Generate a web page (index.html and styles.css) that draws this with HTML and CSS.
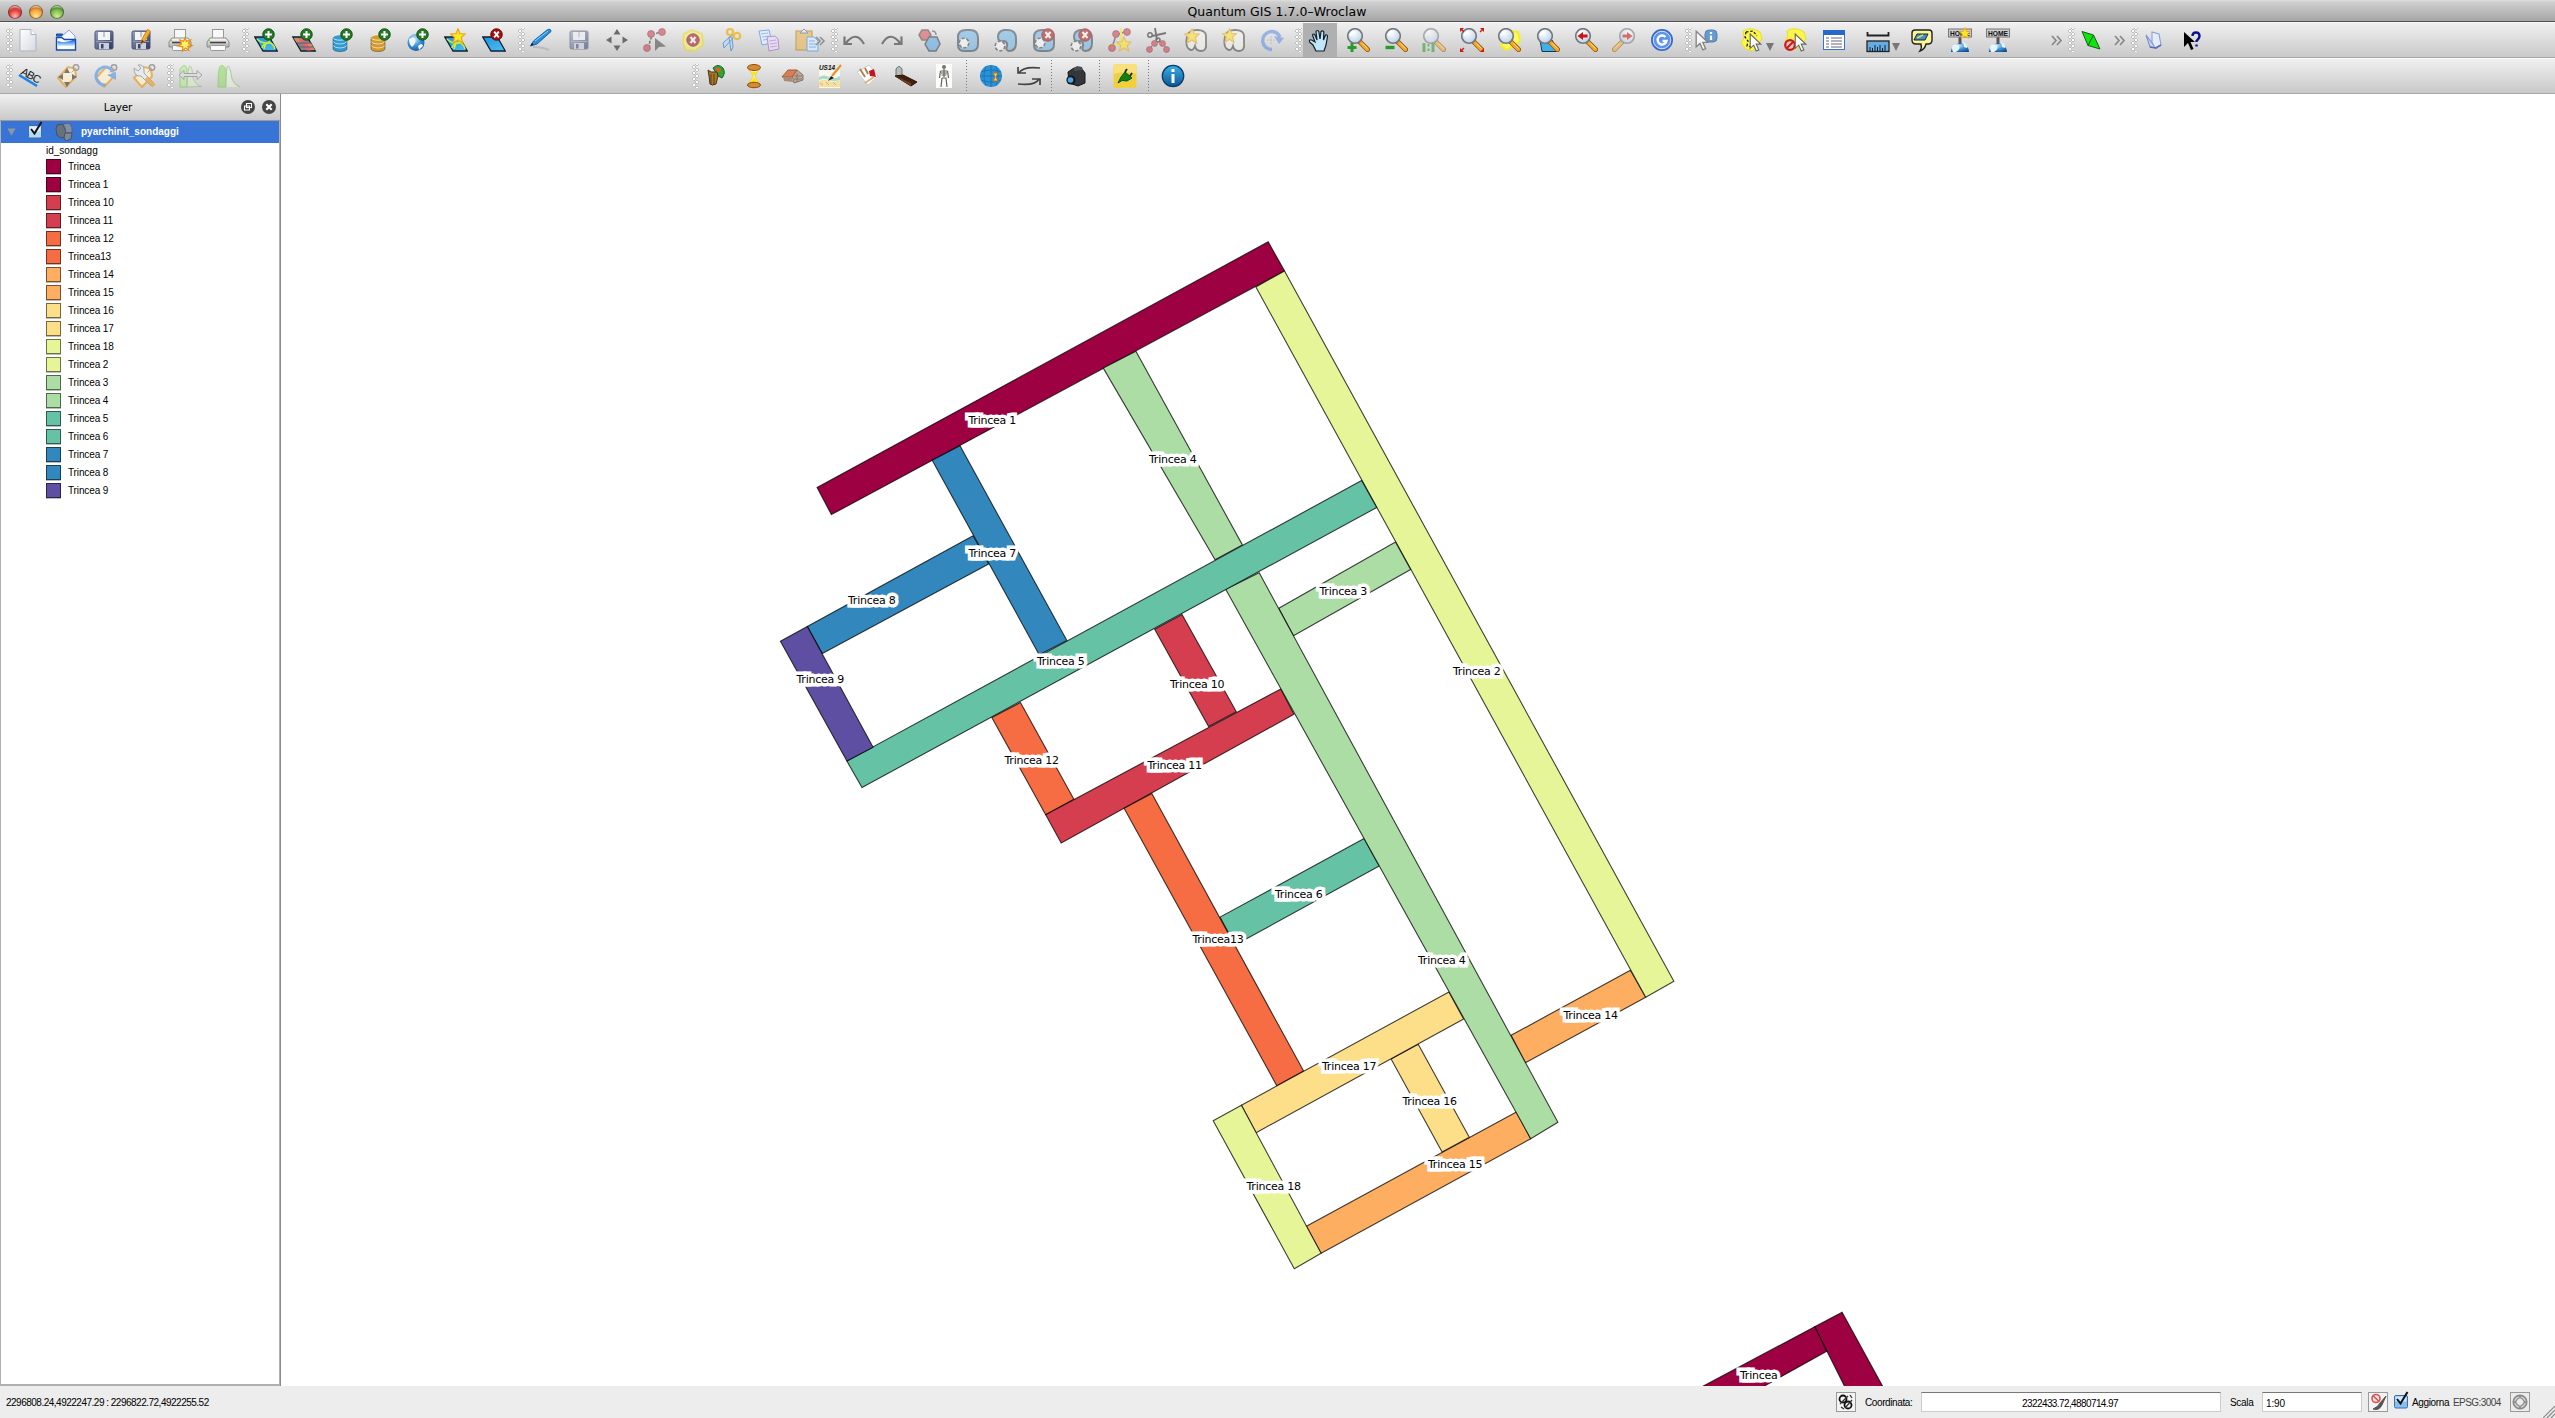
FILE: index.html
```html
<!DOCTYPE html>
<html lang="it">
<head>
<meta charset="utf-8">
<title>Quantum GIS 1.7.0-Wroclaw</title>
<link rel="stylesheet" href="styles.css">
</head>
<body>
<svg class="defs" width="0" height="0" aria-hidden="true">
  <defs>
    <linearGradient id="gPaper" x1="0" y1="0" x2="1" y2="1"><stop offset="0" stop-color="#fff"/><stop offset="1" stop-color="#d5d9e2"/></linearGradient>
    <linearGradient id="gDisk" x1="0" y1="0" x2="1" y2="1"><stop offset="0" stop-color="#98a3c0"/><stop offset="1" stop-color="#2d3557"/></linearGradient>
    <linearGradient id="gBlue" x1="0" y1="0" x2="0" y2="1"><stop offset="0" stop-color="#0f4fc0"/><stop offset=".55" stop-color="#5aa5f5"/><stop offset="1" stop-color="#d8efff"/></linearGradient>
    <linearGradient id="gSky" x1="0" y1="0" x2="1" y2="1"><stop offset="0" stop-color="#1e93df"/><stop offset="1" stop-color="#4fc0f5"/></linearGradient>
    <linearGradient id="gGray" x1="0" y1="0" x2="0" y2="1"><stop offset="0" stop-color="#fff"/><stop offset="1" stop-color="#aaa"/></linearGradient>
    <radialGradient id="gGlobe" cx=".4" cy=".3" r=".8"><stop offset="0" stop-color="#d3edff"/><stop offset=".5" stop-color="#3d93d8"/><stop offset="1" stop-color="#124a8c"/></radialGradient>
    <radialGradient id="gLens" cx=".4" cy=".3" r=".8"><stop offset="0" stop-color="#fff"/><stop offset="1" stop-color="#b4cbe4"/></radialGradient>
    <linearGradient id="gInfo" x1="0" y1="0" x2="0" y2="1"><stop offset="0" stop-color="#3ab0e8"/><stop offset="1" stop-color="#0a5596"/></linearGradient>
    <symbol id="plus" viewBox="0 0 14 14"><circle cx="7" cy="7" r="6.2" fill="#227a22" stroke="#114a11"/><path d="M7 3.3v7.4M3.3 7h7.4" stroke="#fff" stroke-width="2.2"/></symbol>
    <symbol id="cross" viewBox="0 0 14 14"><circle cx="7" cy="7" r="6.2" fill="#a41010" stroke="#600"/><path d="M4.5 4l5 6M9.5 4l-5 6" stroke="#fff" stroke-width="2"/></symbol>
    <symbol id="star" viewBox="0 0 16 16"><path d="M8 .8l2 4.9 5.2.3-4 3.5 1.5 5.6L8 12l-4.7 3.1 1.4-5.6-4-3.5 5.3-.3z" fill="#ffea20" stroke="#f0a818" stroke-width="1.2"/></symbol>
    <symbol id="disk" viewBox="0 0 24 24"><rect x="3" y="3" width="18" height="18" rx="1.5" fill="url(#gDisk)" stroke="#4b5575"/><rect x="6" y="4" width="12" height="8" fill="#f2f4f8"/><path d="M12 4v5" stroke="#8a94ad"/><path d="M4 13.5h16" stroke="#8d96b5"/><rect x="7" y="15" width="10" height="6" fill="#c9cede"/><rect x="9" y="16" width="2.5" height="4.5" fill="#3a4468"/></symbol>
    <symbol id="printer" viewBox="0 0 24 24"><rect x="6.5" y="1.5" width="11" height="10" fill="#f8f8f8" stroke="#999"/><path d="M4 10h16l3 4v5H1v-5z" fill="url(#gGray)" stroke="#8b8b8b"/><path d="M4 14.5h16" stroke="#444" stroke-width="1.6"/><rect x="4.5" y="17.5" width="15" height="5" rx="1" fill="#fafafa" stroke="#999"/><circle cx="3" cy="12.5" r="1" fill="#7c3"/></symbol>
    <symbol id="tile" viewBox="0 0 24 24"><path d="M.8 9h14.5l8 14H9z" fill="url(#gSky)" stroke="#102030" stroke-width="1.3"/></symbol>
    <symbol id="vect" viewBox="0 0 24 24"><use href="#tile"/><path d="M3 11q4 4 9 4t3-5M8 20q1-4 6-5t7 6M12 15l-2 6" fill="none" stroke="#c8ee30" stroke-width="1.6"/></symbol>
    <symbol id="lens" viewBox="0 0 24 24"><path d="M14 14l7.5 7.5" stroke="#8a5510" stroke-width="5" stroke-linecap="round"/><path d="M15 15l6.4 6.4" stroke="#f6a72a" stroke-width="3.6" stroke-linecap="round"/><path d="M16.5 15.5l5 5" stroke="#ffdf90" stroke-width="1"/><circle cx="9" cy="8" r="7.3" fill="url(#gLens)" stroke="#72777e" stroke-width="1.6"/><path d="M4.5 8Q5 4 9 3.5" stroke="#fff" stroke-width="1.4" fill="none"/></symbol>
    <symbol id="arrow" viewBox="0 0 12 18"><path d="M1 1v13.5l3.3-3 2.4 5.6 2.4-1.1-2.4-5.4H11z" fill="#fff" stroke="#666" stroke-width="1.1"/></symbol>
    <symbol id="node" viewBox="0 0 8 8"><circle cx="4" cy="4" r="3.4" fill="#cc3a46" stroke="#7a2028" stroke-width=".8"/></symbol>
    <symbol id="tag" viewBox="0 0 24 24"><path d="M2 14L12 3l7 1.5 1 8L10 23z" fill="#fff3d0" stroke="#e8a23a" stroke-width="2"/><circle cx="20" cy="3.5" r="2.7" fill="none" stroke="#888" stroke-width="1.5"/><path d="M18.5 5.5l-3 3" stroke="#999"/></symbol>
    <symbol id="db" viewBox="0 0 16 18"><path d="M1 3.5v11C1 16.500 4 17.500 8 17.500s7-1 7-3v-11z" fill="currentColor"/><path d="M1 7.500q2 2.500 7 2.500t7-2.500M1 11.500q2 2.500 7 2.500t7-2.500" fill="none" stroke="#fff" stroke-opacity=".6"/><ellipse cx="8" cy="3.500" rx="7" ry="2.700" fill="currentColor" stroke="#fff" stroke-opacity=".7"/><path d="M1 3.500v11C1 16.500 4 17.500 8 17.500s7-1 7-3v-11" fill="none" stroke="#000" stroke-opacity=".35"/></symbol>
    <symbol id="blob" viewBox="0 0 24 24"><path d="M2 9Q2 2 10 2h4q8 0 8 8v6q0 7-7 7H8q-6 0-6-6z" fill="#6fb6ea" stroke="#3a4652" stroke-width="2"/></symbol>
    <symbol id="hole" viewBox="0 0 12 12"><circle cx="6" cy="6" r="4.8" fill="#fff" stroke="#444" stroke-width="1.6" stroke-dasharray="3.2 1.7"/></symbol>
    <symbol id="lobe" viewBox="0 0 24 24"><path d="M10 2h4q8 0 8 9v4q0 8-7 8-4-1-2-5 1-4-3-5-6 1-6-4 0-6 6-7z" fill="#6fb6ea" stroke="#3a4652" stroke-width="2"/></symbol>
    <symbol id="merge" viewBox="0 0 24 24"><path d="M3 8q2-6 10-6 9 0 9 6v7q1 8-5 8-5 0-6-5-2 6-6 3-4-3-2-13z" fill="#f7f7f0" stroke="#444" stroke-width="1.8"/></symbol>
    <symbol id="home" viewBox="0 0 24 24"><path d="M3 24a9 9 0 1 1 18 0z" fill="url(#gGlobe)"/><path d="M5 17q4-2 6 1t-3 6H5q-2-4 0-7M15 14q5 2 4 6l-3-1z" fill="#e6f4ff"/><path d="M10.5 8h3v8h-3z" fill="#555"/><rect x=".5" y="1" width="23" height="8" fill="#ccc" stroke="#777"/><text x="12" y="8" text-anchor="middle" class="icon-text" font-size="7.5" textLength="20" lengthAdjust="spacingAndGlyphs">HOME</text></symbol>
  </defs>
</svg>

<header class="titlebar">
  <div class="lights"><span class="light red"></span><span class="light amber"></span><span class="light green"></span></div>
  <h1>Quantum GIS 1.7.0–Wroclaw</h1>
</header>

<nav class="toolbar">
  <div class="group g-file">
    <span class="grip"></span>
    <svg class="icon" viewBox="0 0 24 24"><path d="M4 1.5h11l5 5V23H4z" fill="url(#gPaper)" stroke="#aeb3bd"/><path d="M15 1.5v5h5" fill="#fff" stroke="#aeb3bd"/></svg>
    <svg class="icon" viewBox="0 0 24 24"><path d="M2.5 8V6h6l1 2z" fill="#2868d0" stroke="#174aa8"/><path d="M7 9l8-7 6 6v4H5z" fill="#f4f8ff" stroke="#8aa4d8"/><path d="M2.5 9.5h5l3 2h11V22h-19z" fill="#fff" stroke="#174aa8" stroke-width="1.4"/><path d="M3.500 13q8 3 17.500-2v7H3.500z" fill="url(#gBlue)"/></svg>
    <svg class="icon" viewBox="0 0 24 24"><use href="#disk"/></svg>
    <svg class="icon" viewBox="0 0 24 24"><use href="#disk" x="-1"/><path d="M11 16l1-5 5.5-9.5 3 1.8L15 13z" fill="#f7b02c" stroke="#c8801a"/><path d="M11 16l1-4 2 1.200z" fill="#333"/></svg>
    <svg class="icon" viewBox="0 0 24 24"><use href="#printer"/><path d="M17 10l1.5 3.500 4-1.500-2 3.500 3.500 2-4 .8.700 4-3.200-2.300-3 3 .3-4.200L10 18l3.500-2L12 12l3.500 1.500z" fill="#fff36b" stroke="#ef8f12" stroke-width="1.3"/></svg>
    <svg class="icon" viewBox="0 0 24 24"><use href="#printer"/></svg>
  </div>
  <div class="group g-layers">
    <span class="grip"></span>
    <svg class="icon" viewBox="0 0 24 24"><use href="#vect"/><use href="#plus" x="8" y="0" width="13" height="13"/></svg>
    <svg class="icon" viewBox="0 0 24 24"><path d="M.8 9h14.5l8 14H9z" fill="#8f8478" stroke="#102030" stroke-width="1.3"/><path d="M1.500 10h5l3 4.500h-5zM14 15h5l4 7h-5z" fill="#d38a60"/><path d="M7 10h5l7 12.500h-4z" fill="#e45f83"/><path d="M5 15h14M7 19h14" stroke="#5d6068"/><use href="#plus" x="8" y="0" width="13" height="13"/></svg>
    <svg class="icon dbblue" viewBox="0 0 24 24"><use href="#db" x="2" y="6" width="16" height="18"/><use href="#plus" x="10" y="0" width="13" height="13"/></svg>
    <svg class="icon dbgold" viewBox="0 0 24 24"><use href="#db" x="2" y="6" width="16" height="18"/><use href="#plus" x="10" y="0" width="13" height="13"/></svg>
    <svg class="icon" viewBox="0 0 24 24"><circle cx="10" cy="14.5" r="8.5" fill="url(#gGlobe)"/><path d="M3 11q4-3 6 0t-3 8q-3-3-3-8M12 18q4-4 5 0l-4 4z" fill="#f0f8ff"/><use href="#plus" x="10" y="0" width="13" height="13"/></svg>
    <svg class="icon" viewBox="0 0 24 24"><use href="#vect"/><use href="#star" x="6" y="0" width="16" height="16"/></svg>
    <svg class="icon" viewBox="0 0 24 24"><use href="#tile"/><use href="#cross" x="8" y="0" width="13" height="13"/></svg>
  </div>
  <div class="group g-edit">
    <span class="grip"></span>
    <svg class="icon" viewBox="0 0 24 24"><path d="M4 19q10 0 16 3" stroke="#bbb" stroke-width="2" fill="none"/><path d="M1.500 18l3-5L18 2q4-2 4 1.500L8 16z" fill="#2790e0" stroke="#1763a8"/><path d="M6 13L19 3" stroke="#8fd0ff"/><path d="M1.500 18l1.500-3 1.500 1.500z" fill="#111"/></svg>
    <svg class="icon off" viewBox="0 0 24 24"><use href="#disk"/></svg>
    <svg class="icon" viewBox="0 0 24 24" fill="#6b6b6b"><path d="M12 1l3.500 5.500h-7zM12 23l3.500-5.500h-7zM1 12l5.500-3.500v7zM23 12l-5.500-3.500v7z"/></svg>
    <svg class="icon off" viewBox="0 0 24 24"><path d="M5 20L9 7l11-4" stroke="#333" fill="none" stroke-width="1.6" stroke-dasharray="3 1.5"/><use href="#node" x="0" y="16" width="8" height="8"/><use href="#node" x="4" y="2" width="8" height="8"/><use href="#node" x="15" y="0" width="8" height="8"/><path d="M12 10v13l4-4 7-.5z" fill="#444"/></svg>
    <svg class="icon off" viewBox="0 0 24 24"><path d="M3 6l8-4 10 4 1 11-8 6-9-1-3-7z" fill="#fff36a" stroke="#e8e020" stroke-width="2"/><use href="#cross" x="5" y="5" width="14" height="14"/></svg>
    <svg class="icon off2" viewBox="0 0 24 24"><path d="M15 9L5 20l-1-5 9-8zM10 9l2 14 2-4-1-10z" fill="#b8dcff" stroke="#4a86c8"/><circle cx="11" cy="4" r="3" fill="none" stroke="#e8b41c" stroke-width="2.2"/><circle cx="18" cy="8" r="3.2" fill="none" stroke="#e8b41c" stroke-width="2.2"/></svg>
    <svg class="icon off2" viewBox="0 0 24 24"><path d="M2 3l10-1 3 13-10 2z" fill="#e4f0ff" stroke="#5b9ae8"/><path d="M4 6l7-1M5 9l7-1M6 12l7-1" stroke="#7ab0f0"/><path d="M10 9l8-1 3 3 1 10-10 2z" fill="#ecdcfa" stroke="#a87acc"/><path d="M12 13l7-1M13 16l7-1M13 19l7-1" stroke="#bb96dc"/></svg>
    <svg class="icon off2" viewBox="0 0 24 24"><rect x="1" y="3" width="16" height="19" fill="#e8be70" stroke="#b98532"/><path d="M5 5l4-4 4 4z" fill="#e6eef8" stroke="#6b84a8"/><path d="M12 9h7l4 4v10H12z" fill="#dcecff" stroke="#5b9ae8"/><path d="M14 13h6M14 16h7M14 19h7" stroke="#68a4ec"/><path d="M21 9l4 4-4 4M25 9l4 4-4 4" fill="none" stroke="#777" stroke-width="1.6"/></svg>
  </div>
  <div class="group g-digit">
    <span class="grip"></span>
    <svg class="icon" viewBox="0 0 24 24"><path d="M22 16Q14 2 4 15M2.500 8.500V16h7.500" fill="none" stroke="#777" stroke-width="2.2"/></svg>
    <svg class="icon" viewBox="0 0 24 24"><path d="M2 16Q10 2 20 15M21.500 8.500V16h-7.500" fill="none" stroke="#777" stroke-width="2.2"/></svg>
    <svg class="icon off" viewBox="0 0 24 24"><path d="M1 7l3-5h6l3 5-3 5H4z" fill="#e04a52" stroke="#444" stroke-width="1.5"/><path d="M7 16l4-7h8l3 7-4 7h-7z" fill="#55aae8" stroke="#333" stroke-width="1.5"/><path d="M14 3q4 0 4 4" fill="none" stroke="#555" stroke-width="1.5"/></svg>
    <svg class="icon off" viewBox="0 0 24 24"><use href="#blob"/><use href="#hole" x="2" y="9" width="12" height="12"/></svg>
    <svg class="icon off" viewBox="0 0 24 24"><use href="#lobe"/><use href="#hole" x="0" y="12" width="12" height="12"/></svg>
    <svg class="icon off" viewBox="0 0 24 24"><use href="#blob"/><use href="#hole" x="2" y="9" width="12" height="12"/><use href="#cross" x="9" y="0" width="14" height="14"/></svg>
    <svg class="icon off" viewBox="0 0 24 24"><use href="#lobe"/><use href="#hole" x="0" y="12" width="12" height="12"/><use href="#cross" x="8" y="0" width="14" height="14"/></svg>
    <svg class="icon off" viewBox="0 0 24 24"><path d="M4 20L8 7l11-4" stroke="#444" fill="none" stroke-width="1.5"/><path d="M13 0v14M0 17h11" stroke="#ee2" stroke-width="2"/><use href="#node" x="0" y="16" width="8" height="8"/><use href="#node" x="4" y="2" width="8" height="8"/><use href="#node" x="15" y="0" width="8" height="8"/><use href="#star" x="8" y="8" width="16" height="16"/></svg>
    <svg class="icon off" viewBox="0 0 24 24"><path d="M9 0l2 12M20 5L6 8" stroke="#222" stroke-width="1.8"/><circle cx="4" cy="7" r="2.2" fill="none" stroke="#222" stroke-width="1.5"/><circle cx="12" cy="12" r="2" fill="none" stroke="#222" stroke-width="1.5"/><path d="M3 22l5-7M21 22l-4-7" stroke="#444"/><use href="#node" x="0" y="18" width="7" height="7"/><use href="#node" x="5" y="12" width="7" height="7"/><use href="#node" x="13" y="12" width="7" height="7"/><use href="#node" x="17" y="18" width="7" height="7"/></svg>
    <svg class="icon off" viewBox="0 0 24 24"><use href="#merge"/><use href="#star" x="0" y="0" width="16" height="16"/></svg>
    <svg class="icon off" viewBox="0 0 24 24"><use href="#merge"/><use href="#star" x="0" y="0" width="15" height="15"/></svg>
    <svg class="icon off" viewBox="0 0 24 24"><path d="M12 21.500A9 9 0 1 1 20 9" fill="none" stroke="#5b8de0" stroke-width="3.4"/><path d="M14 8l10 2-5 6z" fill="#5b8de0"/><path d="M11 8v8M7 12h8" stroke="#aaa" stroke-dasharray="2 1"/></svg>
  </div>
  <div class="group g-nav">
    <span class="grip"></span>
    <span class="icon pressed"><svg viewBox="0 0 24 24" width="24" height="24"><path d="M8 23L5 17 1.500 14q-.5-3 2-2L7 14 4.500 7q1-2 2.500 0l2 5-1-8.500q1.500-2 2.800 0L12 11l1-7.500q2-1.500 2.800.5L15.500 12l2-5q2-.5 2 1.500L18 17l-2 6z" fill="#bfe6fb" stroke="#16202a" stroke-width="1.2"/></svg></span>
    <svg class="icon" viewBox="0 0 24 24"><use href="#lens"/><path d="M6 15v9M1.500 19.500h9" stroke="#2a9a2a" stroke-width="3"/></svg>
    <svg class="icon" viewBox="0 0 24 24"><use href="#lens"/><path d="M1.500 19.500h9" stroke="#2a9a2a" stroke-width="3.4"/></svg>
    <svg class="icon off" viewBox="0 0 24 24"><use href="#lens"/><path d="M2 15v9M11 15v9" stroke="#2a9a2a" stroke-width="3"/><path d="M6.500 16v2.500M6.500 20.500V23" stroke="#2a9a2a" stroke-width="2"/></svg>
    <svg class="icon" viewBox="0 0 24 24"><use href="#lens"/><path d="M0 4V0h4zM20 0h4v4zM0 20v4h4zM20 24h4v-4z" fill="#d01818"/><path d="M1 1l3 3M23 1l-3 3M1 23l3-3" stroke="#d01818" stroke-width="1.3"/></svg>
    <svg class="icon" viewBox="0 0 24 24"><path d="M12 3l8 1 2 8-4 5-10 5-5-5z" fill="#fff86a" stroke="#f4ee20" stroke-width="2"/><use href="#lens" x="-1"/></svg>
    <svg class="icon" viewBox="0 0 24 24"><path d="M4 12h12l6 11.500H6z" fill="#3fb0ee" stroke="#234"/><use href="#lens"/></svg>
    <svg class="icon" viewBox="0 0 24 24"><use href="#lens"/><path d="M3.500 8L9 4v2.500h4.500v3H9V12z" fill="#cc1212"/></svg>
    <svg class="icon off" viewBox="0 0 24 24"><use href="#lens" transform="translate(24 0) scale(-1 1)"/><path d="M20.500 8L15 4v2.500h-4.500v3H15V12z" fill="#cc1212"/></svg>
    <svg class="icon" viewBox="0 0 24 24"><circle cx="12" cy="12" r="10.2" fill="#5c93ec" stroke="#3a68c8" stroke-width="1.6"/><circle cx="12" cy="12" r="8.7" fill="none" stroke="#cfe0ff" stroke-width="1"/><path d="M15.500 9A4.500 4.500 0 1 0 16.500 13H12.500" fill="none" stroke="#fff" stroke-width="2.4"/></svg>
  </div>
  <div class="group g-attr">
    <span class="grip"></span>
    <svg class="icon off2" viewBox="0 0 24 24"><rect x="11" y="2" width="12" height="12" rx="4" fill="#3d84cc" stroke="#2a5f9a"/><path d="M17 4v2M17 7.500V12" stroke="#fff" stroke-width="2.2"/><use href="#arrow" x="1" y="2" width="14" height="21"/></svg>
    <svg class="icon wide" viewBox="0 0 24 24"><path d="M3 3q8-5 17 1l2 7-5 6-4 6-7-2-5-6 3-5z" fill="#fdf64a" stroke="#e8e020"/><path d="M6 4l7-1 4 5M6 4l-1 5 3 4-1 5 6 1" fill="none" stroke="#222" stroke-dasharray="2.5 1.8" stroke-width="1.3"/><use href="#arrow" x="9" y="5" width="13" height="19"/><path d="M26 15h8l-4 8z" fill="#777"/></svg>
    <svg class="icon" viewBox="0 0 24 24"><path d="M3 3q8-5 17 1l2 7-5 6-4 4-7-2-5-6 3-5z" fill="#fdf64a" stroke="#e8e020"/><circle cx="6" cy="17" r="4.8" fill="#f4c8c0" stroke="#cc1818" stroke-width="2.2"/><path d="M3 20l6-6" stroke="#cc1818" stroke-width="2"/><use href="#arrow" x="10" y="5" width="13" height="19"/></svg>
    <svg class="icon" viewBox="0 0 24 24"><rect x="1.500" y="2.500" width="21" height="19" fill="#fff" stroke="#3a72c8"/><rect x="1" y="2" width="22" height="5" fill="#2868cc"/><path d="M4 10h3M4 13h3M4 16h3M4 19h3M9 10h11M9 13h11M9 16h11M9 19h11" stroke="#667" stroke-width="1.1"/></svg>
    <svg class="icon" viewBox="0 0 24 24"><path d="M1.500 4v3.500h21V4" fill="none" stroke="#222" stroke-width="1.8"/><rect x="1" y="13" width="22" height="10.5" fill="#67abe0" stroke="#222" stroke-width="1.3"/><path d="M4 23v-4M6.500 23v-3M9 23v-6M11.500 23v-4M14 23v-6M16.500 23v-3M19 23v-6" stroke="#123"/><path d="M26 15h8l-4 8z" fill="#777"/></svg>
    <svg class="icon" viewBox="0 0 24 24"><path d="M5 2h14q3 0 3 3v7q0 4-4 4h-2q-1 5-6 7 2-3 1-7H6q-4 0-4-4V5q0-3 3-3z" fill="#fbf59a" stroke="#222" stroke-width="1.4"/><path d="M7 6h11l-3 6H4z" fill="#3f8fd0" stroke="#222"/><path d="M7 10l6-3" stroke="#cde84a" stroke-width="1.5"/></svg>
    <svg class="icon" viewBox="0 0 24 24"><use href="#home"/><use href="#star" x="10" y="-1" width="14" height="12"/></svg>
    <svg class="icon" viewBox="0 0 24 24"><use href="#home"/></svg>
    <svg class="chevron c-attr" viewBox="0 0 14 24"><path d="M3 8l4 4.500-4 4.500M8 8l4 4.500-4 4.500" fill="none" stroke="#888" stroke-width="1.7"/></svg>
  </div>
  <div class="group g-plugin">
    <span class="grip"></span>
    <svg class="icon" viewBox="0 0 24 24"><path d="M3 3.500L14.500 7 21 21 9 17.500z" fill="#0ce60c" stroke="#1c5a1c"/><path d="M14.500 7L9 17.500" stroke="#1c5a1c"/></svg>
    <svg class="chevron c-plugin" viewBox="0 0 14 24"><path d="M3 8l4 4.500-4 4.500M8 8l4 4.500-4 4.500" fill="none" stroke="#888" stroke-width="1.7"/></svg>
  </div>
  <div class="group g-help">
    <span class="grip"></span>
    <svg class="icon" viewBox="0 0 24 24"><path d="M4 7l4 12 6 1-4-5z" fill="#c6d4fa" stroke="#7f90cc" stroke-width="1.1"/><path d="M10 4l7 2 2 11-6 3-3-6z" fill="#e4ecff" stroke="#8f9ed4" stroke-width="1.1"/><path d="M8 19l6 1 5-3" stroke="#5a6cb4" fill="none" stroke-width="1.5"/></svg>
    <svg class="icon" viewBox="0 0 24 24"><path d="M4 4v15l4-4 3 7 2.500-1-3-7H15z" fill="#000"/><path d="M12.500 8q0-3.500 3.500-3.500t3.500 3.500q0 2-3 5v1M16.500 16.500v2" fill="none" stroke="#10128c" stroke-width="2.4"/></svg>
  </div>
</nav>

<nav class="toolbar">
  <div class="group g-label">
    <span class="grip"></span>
    <svg class="icon" viewBox="0 0 24 24"><path d="M1 11l18 11" stroke="#1684f4" stroke-width="2.6"/><text x="2" y="10" class="icon-text abc" font-size="11" transform="rotate(28 2 10)" textLength="21">ABC</text></svg>
    <svg class="icon off2" viewBox="0 0 24 24"><use href="#tag"/><path d="M11 4l3 5H8zM11 23l3-5H8zM2 13l5-3v6zM21 13l-5-3v6z" fill="#555"/></svg>
    <svg class="icon off2" viewBox="0 0 24 24"><use href="#tag"/><path d="M12 21A9 9 0 1 1 19 8" fill="none" stroke="#6ba2ea" stroke-width="3"/><path d="M13 11l9-3v8z" fill="#6ba2ea"/></svg>
    <svg class="icon off2" viewBox="0 0 24 24"><use href="#tag"/><path d="M2 4l4 3 3-3-3-3q6-1 6 5v3l9 9q2 4-2 4L9 12q-7 1-7-8z" fill="#e8edf2" stroke="#8f969e"/><path d="M14 14l8 8" stroke="#eaa640" stroke-width="4"/></svg>
  </div>
  <div class="group g-raster">
    <span class="grip"></span>
    <svg class="icon off" viewBox="0 0 24 24"><path d="M2 23V5q5-7 7 0v18z" fill="#b6ee90" stroke="#6cc24a"/><path d="M9 23Q10 2 12 2t3 12q3 8 9 8.500z" fill="#d6f2c4" stroke="#90b880"/><path d="M1 11l5-4.500v3h13v-3l5 4.500-5 4.500v-3H6v3z" fill="#ddd" stroke="#777"/></svg>
    <svg class="icon off" viewBox="0 0 24 24"><path d="M2 23Q2 2 5 1.500q5 0 5 7V23z" fill="#8fe060" stroke="#6cc24a"/><path d="M10 23Q10 2 12 2t4 13q3 7 8 8" fill="#e8f6de" stroke="#7fb86a"/></svg>
  </div>
  <div class="group g-arch">
    <span class="grip"></span>
    <svg class="icon" viewBox="0 0 24 24"><path d="M9 4q5-5 10 0 3 5-1 10l-4-2z" fill="#2ba52b" stroke="#163"/><path d="M11 4q5-2 6 3l-3 2z" fill="#e85a28"/><path d="M4 6l3 2h6l1 4-2 8q-4 2-6 0L5 12z" fill="#a87828" stroke="#4a3410"/><path d="M7 10v10M10 10v11" stroke="#5c4014"/></svg>
    <svg class="icon" viewBox="0 0 24 24"><path d="M7 5h10l-4 7 4 8H7l4-8z" fill="#fff6b0" stroke="#e8cc60"/><path d="M9 8h6l-3 4zM12 13l5 7H7z" fill="#ffe600"/><ellipse cx="12" cy="3.500" rx="6.500" ry="3" fill="#d98a30" stroke="#8a4e10"/><ellipse cx="12" cy="21" rx="6.500" ry="2.700" fill="#d98a30" stroke="#8a4e10"/></svg>
    <svg class="icon" viewBox="0 0 24 24"><path d="M12 11l5-5 6 5v5l-9 3z" fill="#b8a898" stroke="#857668"/><path d="M2 13l6-7h9l-5 7z" fill="#d87e56" stroke="#a8583a"/><path d="M3 13h9l1 5-9-1z" fill="#a88c78"/><path d="M14 12h8M14 15h8M17 9v9" stroke="#786a60" stroke-width=".7"/></svg>
    <svg class="icon" viewBox="0 0 24 24"><rect x="1" y="6" width="21" height="18" fill="#f8f6ee"/><path d="M1 13q5-3 10 0t11-1v4q-6 2-11 0t-10 0z" fill="#a8dcc8"/><path d="M1 17q5-2 10 0t11-1v7H1z" fill="#f4e49a"/><path d="M2 19l3 2M8 18l3 3M15 18l3 3" stroke="#e89ab0"/><text x="1" y="5.500" class="icon-text" font-size="7.5" font-style="italic" textLength="16" lengthAdjust="spacingAndGlyphs">US14</text><path d="M10 17l3-5 3 2z" fill="#222"/><path d="M14 12L23 1" stroke="#e89020" stroke-width="2"/></svg>
    <svg class="icon" viewBox="0 0 24 24"><path d="M1 8L13 1l9 11-10 9z" fill="#fff" stroke="#ccc"/><path d="M4 5l5 8M9 4l3 6" stroke="#b07a48" stroke-width="1.8"/><path d="M13 7l5-2 2 8-6-1z" fill="#c41420"/><path d="M9 19l9-6" stroke="#ddb27a" stroke-width="2"/></svg>
    <svg class="icon" viewBox="0 0 24 24"><path d="M2 11V5q3-5 6 0v8z" fill="#b4bcbc" stroke="#6c7474"/><path d="M1 12l8-1 14 7-6 4z" fill="#43200c" stroke="#2a1206"/><path d="M1 12l16 7v3z" fill="#774020"/></svg>
    <svg class="icon" viewBox="0 0 24 24"><rect x="4" y="0" width="16" height="24" fill="#fdfdfb"/><circle cx="12" cy="3" r="2" fill="#77756a"/><path d="M12 5v8M8.500 7h7M9 9h6M9.500 11h5M8.500 7l-1 7M15.500 7l1 7M10 14h4l1 9M10 14l-1 9" stroke="#66645a" fill="none" stroke-width="1.2"/></svg>
    <span class="sep s1"></span>
    <svg class="icon" viewBox="0 0 24 24"><circle cx="12" cy="12" r="11" fill="#2a90d8"/><path d="M2 8q10-4 20 0M1 12h22M2 16q10 4 20 0M12 1v22M7 2q-4 10 0 20M17 2q4 10 0 20" stroke="#1970b0" fill="none" stroke-width=".8"/><path d="M14 9h5l-2 4 2 4h-5l2-4z" fill="#f0d060" stroke="#b47420"/></svg>
    <svg class="icon" viewBox="0 0 24 24"><path d="M2 9q4-7 21-5M1 3v6h8M22 15q-4 7-21 5M23 21v-6h-8" fill="none" stroke="#444" stroke-width="1.7"/></svg>
    <span class="sep s1"></span>
    <svg class="icon" viewBox="0 0 24 24"><path d="M4 8l6-4 8 1 3 4v10l-7 3-9-3z" fill="#33363a" stroke="#17181a"/><path d="M10 4l3-2 5 1 1 3-9 1z" fill="#4b4f54"/><circle cx="7" cy="16" r="4.600" fill="#16181a"/><circle cx="6.500" cy="16" r="2.800" fill="#4aa6ea"/></svg>
    <span class="sep s2"></span>
    <svg class="icon" viewBox="0 0 24 24"><rect x=".5" y="0" width="23" height="24" rx="2.500" fill="#f2cf3c"/><path d="M.5 2q0-2 2.500-2h18q2.500 0 2.500 2v8q-10-4-23 0z" fill="#f8e07c"/><path d="M5 19l3-6 4-5 7 6-5 3-5-.5z" fill="#108010" stroke="#052"/><path d="M12 8l2-3M17 12l2-3" stroke="#222" stroke-width="1.8"/></svg>
    <span class="sep s3"></span>
    <svg class="icon" viewBox="0 0 24 24"><circle cx="12" cy="12" r="10.7" fill="url(#gInfo)" stroke="#0b3d68" stroke-width="1.3"/><path d="M12 5v3M12 10v9" stroke="#fff" stroke-width="3"/></svg>
  </div>
</nav>

<main class="workspace">
  <aside class="panel">
    <div class="panel-head">
      <h2>Layer</h2>
      <svg class="pbtn" viewBox="0 0 14 14"><circle cx="7" cy="7" r="7" fill="#444"/><path d="M5.500 3.500h5v4h-5zM3.500 6h5v4h-5z" fill="#444" stroke="#fff" stroke-width="1.1"/></svg>
      <svg class="pbtn" viewBox="0 0 14 14"><circle cx="7" cy="7" r="7" fill="#444"/><path d="M4.300 4.300l5.400 5.400M9.700 4.300L4.300 9.700" stroke="#fff" stroke-width="2.2"/></svg>
    </div>
    <div class="tree">
      <div class="layer-row">
        <svg class="tri" viewBox="0 0 10 8"><path d="M.5 0h9L5 8z" fill="#8f96a0"/></svg>
        <svg class="check" viewBox="0 0 16 18"><rect x="1.500" y="4.500" width="13" height="12.500" rx="1.500" fill="#b4daf6" stroke="#3c6ea8"/><rect x="2.500" y="5.500" width="11" height="5" fill="#dff0fd"/><path d="M4 8l3.500 4.500L14.500 1" fill="none" stroke="#111" stroke-width="2"/></svg>
        <svg class="poly" viewBox="0 0 18 18"><path d="M2 2l5-1 2 3 2 5-1 5-4 1-4-3-1-6z" fill="#66737f" stroke="#46505c"/><path d="M8 1l6-1 3 4 0 6-6 0-1-5z" fill="#8190a6" stroke="#50607a"/><path d="M10 10h7l-1 6-5 2-2-3z" fill="#7c8998" stroke="#46505c"/></svg>
        <strong>pyarchinit_sondaggi</strong>
      </div>
      <p class="field">id_sondagg</p>
      <ul class="legend">
        <li><i class="k1"></i>Trincea</li>
        <li><i class="k1"></i>Trincea 1</li>
        <li><i class="k2"></i>Trincea 10</li>
        <li><i class="k2"></i>Trincea 11</li>
        <li><i class="k3"></i>Trincea 12</li>
        <li><i class="k3"></i>Trincea13</li>
        <li><i class="k4"></i>Trincea 14</li>
        <li><i class="k4"></i>Trincea 15</li>
        <li><i class="k5"></i>Trincea 16</li>
        <li><i class="k5"></i>Trincea 17</li>
        <li><i class="k6"></i>Trincea 18</li>
        <li><i class="k6"></i>Trincea 2</li>
        <li><i class="k7"></i>Trincea 3</li>
        <li><i class="k7"></i>Trincea 4</li>
        <li><i class="k8"></i>Trincea 5</li>
        <li><i class="k8"></i>Trincea 6</li>
        <li><i class="k9"></i>Trincea 7</li>
        <li><i class="k9"></i>Trincea 8</li>
        <li><i class="k10"></i>Trincea 9</li>
      </ul>
    </div>
  </aside>
  <svg class="map" viewBox="281 94 2274 1292">
    <g class="shapes">
      <path class="k1" d="M1842.100 1312.300L1814.700 1326.700 1844.400 1386 1850 1396H1888z"/>
      <path class="k1" d="M1814.700 1326.700L1826.700 1351.300 1764.500 1386 1740 1399H1680L1703.400 1386z"/>
      <path class="k1" d="M1268.200 241.800L1284.500 270.900 831.400 514.600 817.100 487.500z"/>
      <path class="k2" d="M1154.700 629.300L1182 614.600 1236.300 711.800 1208.600 726.400z"/>
      <path class="k3" d="M991.800 717.500L1020.400 702.500 1073.900 799.300 1045.700 814.700z"/>
      <path class="k2" d="M1280.800 688.900L1293.900 714.300 1061.200 842.900 1045.700 814.700z"/>
      <path class="k8" d="M1364.100 838.600L1379.200 866.100 1235 945 1220 917.100z"/>
      <path class="k3" d="M1124.100 808.200L1151.800 793.600 1303.600 1071 1276.800 1085.700z"/>
      <path class="k4" d="M1630.400 970.300L1645.700 997.300 1525.400 1062.700 1511.100 1035.300z"/>
      <path class="k4" d="M1516.400 1112L1530.700 1138.700 1321.100 1253.300 1306.400 1226.300z"/>
      <path class="k5" d="M1391.100 1059L1418.200 1044.300 1469.300 1137.300 1442.100 1152z"/>
      <path class="k5" d="M1448.900 992L1463.600 1019 1256.100 1132.700 1241.400 1105.300z"/>
      <path class="k6" d="M1213.200 1120.700L1241.400 1105.300 1321.100 1253.300 1294.300 1268.700z"/>
      <path class="k6" d="M1255.900 287L1284.500 270.900 1673.900 981.300 1645.700 997.300z"/>
      <path class="k7" d="M1395.500 542.100L1410.600 569.600 1293.500 635.700 1278.800 608.200z"/>
      <path class="k7" d="M1103.300 368.100L1135.900 351.300 1242.400 544.900 1215.100 559.800z"/>
      <path class="k7" d="M1225.700 589.300L1259.200 572.800 1557.900 1122.300 1530.700 1138.700z"/>
      <path class="k8" d="M846.900 761.100L862 787.500 1376.700 507.500 1361.600 480.600z"/>
      <path class="k9" d="M973.100 535.700L988.600 564 822.400 653.500 807.300 626.400z"/>
      <path class="k9" d="M932.200 460.300L960 445.800 1066.900 640.500 1039.200 654.700z"/>
      <path class="k10" d="M780.400 641.300L807.300 626.400 873.100 747.300 846.900 761.100z"/>
    </g>
    <g class="labels">
      <text x="968.500" y="424">Trincea 1</text>
      <text x="1149" y="463">Trincea 4</text>
      <text x="968.500" y="557">Trincea 7</text>
      <text x="848" y="604">Trincea 8</text>
      <text x="796.500" y="683">Trincea 9</text>
      <text x="1037" y="665">Trincea 5</text>
      <text x="1319.500" y="595">Trincea 3</text>
      <text x="1170" y="688">Trincea 10</text>
      <text x="1004.500" y="764">Trincea 12</text>
      <text x="1147.500" y="769">Trincea 11</text>
      <text x="1453" y="675">Trincea 2</text>
      <text x="1275" y="898">Trincea 6</text>
      <text x="1192.500" y="943">Trincea13</text>
      <text x="1418" y="964">Trincea 4</text>
      <text x="1563.500" y="1019">Trincea 14</text>
      <text x="1322" y="1070">Trincea 17</text>
      <text x="1402.500" y="1105">Trincea 16</text>
      <text x="1428" y="1168">Trincea 15</text>
      <text x="1246.500" y="1190">Trincea 18</text>
      <text x="1740" y="1379">Trincea</text>
    </g>
  </svg>
</main>

<footer class="status">
  <span class="extent">2296808.24,4922247.29 : 2296822.72,4922255.52</span>
  <svg class="sbtn" viewBox="0 0 20 20"><rect x=".5" y=".5" width="19" height="19" fill="#f4f4f4" stroke="#999"/><circle cx="7" cy="7" r="3.500" fill="none" stroke="#111" stroke-width="1.8"/><circle cx="12" cy="13" r="3.500" fill="none" stroke="#111" stroke-width="1.8"/><path d="M4 12l8-8M9 16l7-8M14 3l2 3M5 15l3 2" stroke="#333" stroke-width="1.3"/></svg>
  <label class="l-coord">Coordinata:</label>
  <span class="input coord">2322433.72,4880714.97</span>
  <label class="l-scale">Scala</label>
  <span class="input scale">1:90</span>
  <svg class="sbtn b-stop" viewBox="0 0 20 20"><rect x=".5" y=".5" width="19" height="19" fill="#f4f4f4" stroke="#999"/><path d="M18 4l-6 7 2 2zM12 11q-2 4-7 6 6 2 9-4z" fill="#555" stroke="#555"/><circle cx="8" cy="6.500" r="4" fill="#fbe4e4" stroke="#d85050" stroke-width="1.6"/><path d="M5.200 3.700l5.600 5.600" stroke="#d85050" stroke-width="1.5"/></svg>
  <svg class="scheck" viewBox="0 0 16 18"><rect x="1.500" y="4.500" width="13" height="12.500" rx="1.500" fill="#86c0f2" stroke="#3c6ea8"/><rect x="2.500" y="5.500" width="11" height="5" fill="#cfe8fd"/><path d="M4 8l3.500 4.500L14.500 1" fill="none" stroke="#111" stroke-width="2"/></svg>
  <label class="l-upd">Aggiorna</label>
  <label class="l-epsg">EPSG:3004</label>
  <svg class="sbtn b-crs" viewBox="0 0 20 20"><rect x=".5" y=".5" width="19" height="19" fill="#ececec" stroke="#999"/><circle cx="10" cy="10" r="6.700" fill="#d4d4d4" stroke="#8a8a8a" stroke-width="1.7"/><path d="M10 3v3M10 14v3M3 10h3M14 10h3" stroke="#8a8a8a" stroke-width="1.6"/><path d="M10 5.500q3 1 4.500 4.500-1.500 3.500-4.500 4.500-3-1-4.500-4.500Q7 6.500 10 5.500z" fill="#ececec" stroke="#8a8a8a" stroke-width="1.300"/></svg>
  <svg class="resize" viewBox="0 0 12 12"><path d="M0 12L12 0M4 12l8-8M8 12l4-4" stroke="#888" stroke-width="1.2"/></svg>
</footer>
</body>
</html>
```
FILE: styles.css
```css
* { box-sizing: border-box; }
body {
  margin: 0; width: 2555px; height: 1418px; overflow: hidden;
  display: flex; flex-direction: column; background: #ededed;
  font: 10px "Liberation Sans", Arial, sans-serif; color: #000;
}
.defs { position: absolute; }
h1, h2, p, ul { margin: 0; padding: 0; font-weight: normal; }

.titlebar {
  height: 22px; flex: none; display: grid; grid-template-columns: 1fr auto 1fr; align-items: center;
  background: linear-gradient(#dedede 0, #cfcfcf 10%, #a6a6a6); border-bottom: 1px solid #515151;
}
.titlebar h1 { font: 12.5px/23px "DejaVu Sans", "Noto Sans", sans-serif; letter-spacing: .03px; width: 180px; white-space: nowrap; }
.lights { display: flex; gap: 7px; padding-left: 8px; }
.light { width: 14px; height: 14px; border-radius: 50%; border: 1px solid #0006; }
.red { background: radial-gradient(circle at 50% 85%, #ffb9b2, #e8403c 50%, #c9423e 65%, #f7b5b0 85%); }
.amber { background: radial-gradient(circle at 50% 85%, #ffe98c, #f2a03c 55%, #cf7a2c 70%, #f9d9a4 85%); }
.green { background: radial-gradient(circle at 50% 85%, #cdf28c, #78b84a 55%, #558e38 70%, #c4e4ab 85%); }

.toolbar {
  height: 36px; flex: none; display: flex; align-items: center;
  background: linear-gradient(#f0f0f0, #c9c9c9); border-bottom: 1px solid #a8a8a8; border-top: 1px solid #fafafa;
}
.group { display: flex; align-items: center; flex: none; }
.icon { width: 24px; height: 24px; margin-right: 14px; flex: none; display: block; overflow: visible; }
.off { opacity: .55; }
.off2 { opacity: .75; }
.icon-text { font-family: "Liberation Sans", Arial, sans-serif; font-weight: bold; fill: #111; }
.abc { font-weight: normal; }
.dbblue { color: #2f9ad4; }
.dbgold { color: #d39a2c; }
.grip {
  width: 8px; height: 24px; flex: none;
  background:
    radial-gradient(circle, #fff 1.2px, #bbb 1.6px, transparent 2px) 0 0 / 4px 6px repeat-y,
    radial-gradient(circle, #fff 1.2px, #bbb 1.6px, transparent 2px) 3px 3px / 4px 6px repeat-y;
}
.pressed { position: relative; background: #b0b0b0; box-shadow: 0 0 0 5px #b0b0b0, 0 -5px 0 5px #a4a4a4, 0 5px 0 5px #bcbcbc; clip-path: inset(-5px -5px); }
.chevron { width: 14px; height: 24px; flex: none; }

.g-file { margin-left: 6px; }
.g-file .grip { margin-right: 2px; }
.g-layers { margin-left: -2px; }
.g-layers .grip { margin-right: 4px; }
.g-edit, .g-digit { margin-left: -2px; }
.g-edit .grip, .g-digit .grip { margin-right: 3px; }
.g-nav { margin-left: -3px; }
.g-nav .grip { margin-right: 5px; }
.g-attr { margin-left: -3px; }
.g-attr .grip { margin-right: 1px; }
.g-attr .icon:nth-child(2) { margin-right: 22px; }
.g-attr .icon:nth-child(3), .g-attr .icon:nth-child(5), .g-attr .icon:nth-child(6) { margin-right: 20px; }
.c-attr { margin-left: 25px; }
.g-plugin { margin-left: 5px; }
.g-plugin .grip { margin-right: 3px; }
.c-plugin { margin-left: -5px; }
.g-help { margin-left: 5px; }
.g-help .grip { margin-right: 3px; }

.g-label { margin-left: 6px; }
.g-label .grip { margin-right: 4px; }
.g-raster { margin-left: -3px; }
.g-raster .grip { margin-right: 3px; }
.g-arch { margin-left: 438px; }
.g-arch .grip { margin-right: 4px; }
.sep { width: 1px; height: 32px; background: repeating-linear-gradient(#777 0 1px, transparent 1px 3px); flex: none; }
.s1 { margin: 0 12px 0 -4px; }
.s2 { margin: 0 13px 0 -3px; }
.s3 { margin: 0 12px 0 -3px; }

.workspace { flex: 1; min-height: 0; display: flex; background: #fff; }
.panel { width: 281px; flex: none; display: flex; flex-direction: column; border-right: 1px solid #8a8a8a; }
.panel-head {
  height: 27px; flex: none; display: flex; align-items: center; gap: 7px; padding-right: 4px;
  background: linear-gradient(#f0f0f0, #c9c9c9); border-bottom: 1px solid #9a9a9a;
}
.panel-head h2 { flex: 1; text-align: center; padding-left: 2px; font: 10.5px "DejaVu Sans", sans-serif; letter-spacing: -.2px; }
.pbtn { width: 14px; height: 14px; }
.tree { flex: 1; border: 1px solid #b0b0b0; border-top: 0; border-bottom-width: 2px; background: #fff; }
.layer-row { height: 22px; background: #3874d6; color: #fff; display: flex; align-items: center; }
.layer-row strong { font-size: 10px; margin-left: 8px; line-height: 24px; }
.tri { width: 9px; height: 8px; margin-left: 6px; }
.check { width: 16px; height: 18px; margin: -5px 0 0 11px; }
.poly { width: 18px; height: 18px; margin: -1px 0 0 12px; }
.field { height: 14px; line-height: 16px; padding-left: 45px; }
.legend { list-style: none; padding-left: 45px; }
.legend li { height: 18px; display: flex; align-items: center; gap: 7px; line-height: 19px; letter-spacing: -.12px; }
.legend i { width: 15px; height: 15px; border: 1px solid #0008; box-shadow: 0 1px 0 #bbb; }

.k1 { background: #9e0142; fill: #9e0142; }
.k2 { background: #d53e4f; fill: #d53e4f; }
.k3 { background: #f66d43; fill: #f66d43; }
.k4 { background: #fdae61; fill: #fdae61; }
.k5 { background: #fedf89; fill: #fedf89; }
.k6 { background: #e6f598; fill: #e6f598; }
.k7 { background: #abdda4; fill: #abdda4; }
.k8 { background: #66c2a5; fill: #66c2a5; }
.k9 { background: #3288bd; fill: #3288bd; }
.k10 { background: #5e4fa2; fill: #5e4fa2; }

.map { width: 2274px; height: 1292px; flex: none; display: block; }
.shapes path { stroke: #000; stroke-opacity: .75; stroke-width: 1.1; }
.labels text {
  font: 11px "DejaVu Sans", sans-serif; letter-spacing: -.25px; fill: #000; stroke: #fff; stroke-width: 7px;
  stroke-linejoin: miter; stroke-miterlimit: 2; paint-order: stroke;
}

.status { height: 32px; flex: none; display: flex; align-items: center; background: #ededed; white-space: nowrap; }
.extent { width: 1830px; padding-left: 6px; flex: none; letter-spacing: -.5px; }
.sbtn { width: 20px; height: 20px; margin-left: 6px; flex: none; }
.l-coord { margin-left: 9px; width: 56px; letter-spacing: -.4px; }
.input { height: 20px; line-height: 21px; background: #fff; border: 1px solid #ccc; border-top: 1px solid #777; letter-spacing: -.15px; }
.coord { width: 300px; text-align: center; padding-right: 2px; letter-spacing: -.6px; }
.l-scale { margin-left: 9px; width: 32px; letter-spacing: -.3px; }
.scale { width: 100px; padding-left: 3px; }
.scheck { width: 16px; height: 18px; margin: -4px 0 0 5px; flex: none; }
.l-upd { margin-left: 3px; width: 41px; letter-spacing: -.35px; }
.l-epsg { width: 51px; color: #444; letter-spacing: -.55px; }
.resize { width: 12px; height: 12px; margin-left: auto; align-self: flex-end; }
```
